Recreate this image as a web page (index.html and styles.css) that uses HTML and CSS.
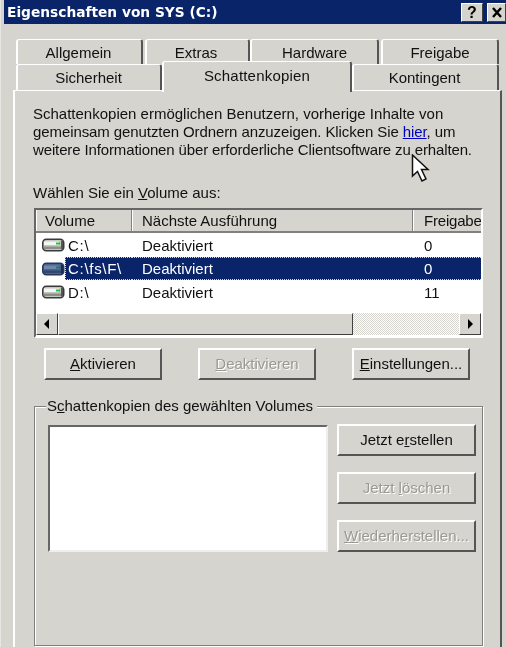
FILE: index.html
```html
<!DOCTYPE html>
<html lang="de">
<head>
<meta charset="utf-8">
<title>Eigenschaften von SYS (C:)</title>
<link rel="stylesheet" href="styles.css">
</head>
<body>
<div class="screen">
  <header class="titlebar">
    <span class="title">Eigenschaften von SYS (C:)</span>
    <span class="capbtns">
      <span class="capbtn">?</span>
      <span class="capbtn capx">
        <svg width="12" height="11" viewBox="0 0 12 11"><path d="M2 1 L10 10 M10 1 L2 10" stroke="#000" stroke-width="2.4" fill="none"/></svg>
      </span>
    </span>
  </header>
  <div class="dialog">
    <div class="tabs">
      <div class="tabrow tabrow-back">
        <div class="tab t-allgemein">Allgemein</div>
        <div class="tab t-extras">Extras</div>
        <div class="tab t-hardware">Hardware</div>
        <div class="tab t-freigabe">Freigabe</div>
      </div>
      <div class="tabrow tabrow-front">
        <div class="tab t-sicherheit">Sicherheit</div>
        <div class="tab tab-active t-schatten">Schattenkopien</div>
        <div class="tab t-kontingent">Kontingent</div>
      </div>
    </div>
    <main class="panel">
      <p class="intro">Schattenkopien ermöglichen Benutzern, vorherige Inhalte von<br><span class="line2">gemeinsam genutzten Ordnern anzuzeigen. Klicken Sie <a class="link">hier</a>, um</span><br><span class="line3">weitere Informationen über erforderliche Clientsoftware zu erhalten.</span></p>
      <p class="list-label">Wählen Sie ein <u>V</u>olume aus:</p>
      <section class="listview">
        <div class="lv-head">
          <div class="col col-vol">Volume</div>
          <div class="col col-next">Nächste Ausführung</div>
          <div class="col col-share">Freigabe</div>
        </div>
        <div class="lv-body">
          <div class="lv-row">
            <div class="cell cell-vol">
              <svg class="drive" width="23" height="14" viewBox="0 0 23 14"><rect x="0.75" y="1.25" width="21" height="11.5" rx="3.5" fill="#c4c6c2" stroke="#3a3a3a" stroke-width="1.5"/><rect x="2" y="3.5" width="15" height="3.5" fill="#f4f6f4"/><rect x="2" y="8.5" width="17" height="2.5" fill="#8c8e8a"/><rect x="14" y="4.5" width="4" height="2" fill="#18c830"/><rect x="19" y="2.5" width="2" height="9" fill="#555"/></svg>
              <span class="vol-name">C:\</span>
            </div>
            <div class="cell cell-next">Deaktiviert</div>
            <div class="cell cell-share">0</div>
          </div>
          <div class="lv-row lv-selected">
            <div class="cell cell-vol">
              <svg class="drive" width="23" height="14" viewBox="0 0 23 14"><rect x="0.75" y="1.25" width="21" height="11.5" rx="3.5" fill="#4a6290" stroke="#26365c" stroke-width="1.5"/><rect x="2" y="3.5" width="15" height="3.5" fill="#6f86ae"/><rect x="2" y="8.5" width="17" height="2.5" fill="#34466e"/><rect x="14" y="4.5" width="4" height="2" fill="#1c7a60"/><rect x="19" y="2.5" width="2" height="9" fill="#1a2a50"/></svg>
              <span class="vol-name sel-name">C:\fs\F\</span>
            </div>
            <div class="cell cell-next sel-next">Deaktiviert</div>
            <div class="cell cell-share sel-share">0</div>
          </div>
          <div class="lv-row">
            <div class="cell cell-vol">
              <svg class="drive" width="23" height="14" viewBox="0 0 23 14"><rect x="0.75" y="1.25" width="21" height="11.5" rx="3.5" fill="#c4c6c2" stroke="#3a3a3a" stroke-width="1.5"/><rect x="2" y="3.5" width="15" height="3.5" fill="#f4f6f4"/><rect x="2" y="8.5" width="17" height="2.5" fill="#8c8e8a"/><rect x="14" y="4.5" width="4" height="2" fill="#18c830"/><rect x="19" y="2.5" width="2" height="9" fill="#555"/></svg>
              <span class="vol-name">D:\</span>
            </div>
            <div class="cell cell-next">Deaktiviert</div>
            <div class="cell cell-share">11</div>
          </div>
        </div>
        <div class="hscroll">
          <div class="sbtn"><svg width="6" height="10" viewBox="0 0 6 10"><path d="M5 0 V10 L0 5 Z" fill="#000"/></svg></div>
          <div class="thumb"></div>
          <div class="track"></div>
          <div class="sbtn"><svg width="6" height="10" viewBox="0 0 6 10"><path d="M1 0 V10 L6 5 Z" fill="#000"/></svg></div>
        </div>
      </section>
      <div class="actions">
        <button class="btn"><u>A</u>ktivieren</button>
        <button class="btn is-disabled"><u>D</u>eaktivieren</button>
        <button class="btn"><u>E</u>instellungen...</button>
      </div>
      <fieldset class="group">
        <legend class="group-label">S<u>c</u>hattenkopien des gewählten Volumes</legend>
        <div class="group-body">
          <div class="copies"></div>
          <div class="side">
            <button class="btn btn-side">Jetzt e<u>r</u>stellen</button>
            <button class="btn btn-side is-disabled">Jetzt <u>l</u>öschen</button>
            <button class="btn btn-side is-disabled"><u>W</u>iederherstellen...</button>
          </div>
        </div>
      </fieldset>
    </main>
  </div>
  <svg class="cursor" width="20" height="30" viewBox="0 0 20 30"><path d="M1.5 1 V22 L6.5 17.5 L11 27 L15 25 L10.5 15.5 L17 15.5 Z" fill="#fff" stroke="#111" stroke-width="1.5"/></svg>
</div>
</body>
</html>
```

FILE: styles.css
```css
* { box-sizing: border-box; }
html, body { margin: 0; padding: 0; }
body { background: #d6d4ce; }
.screen {
  position: relative;
  width: 506px;
  height: 647px;
  overflow: hidden;
  background: #d6d4ce;
  font-family: "Liberation Sans", Arial, sans-serif;
  font-size: 15px;
  color: #111;
  border-left: 1px solid #e8e6e0;
  filter: blur(0.35px);
}
.titlebar {
  height: 24px;
  margin-left: 3px;
  background: #0a246a;
  display: flex;
  align-items: center;
  justify-content: space-between;
  padding: 0 3px 0 3px;
}
.title {
  color: #fff;
  font-family: "DejaVu Sans", sans-serif;
  font-weight: bold;
  font-size: 13.75px;
}
.capbtns { display: flex; gap: 4px; margin-top: 1px; margin-right: -3px; }
.capbtn {
  width: 22px;
  height: 19px;
  background: #d6d4ce;
  border: 1px solid;
  border-color: #fff #404040 #404040 #fff;
  display: flex;
  align-items: center;
  justify-content: center;
  font-weight: bold;
  font-size: 16px;
  color: #000;
}
.capx { width: 19px; }
.dialog { padding: 15px 0 0 12px; }
.tabs { height: 51px; position: relative; z-index: 2; }
.tabrow { display: flex; }
.tabrow-back { height: 25px; padding-left: 3px; }
.tabrow-front { height: 26px; padding-left: 3px; }
.tab {
  background: #d6d4ce;
  border-top: 1px solid #fff;
  border-left: 2px solid #fff;
  border-right: 2px solid #555;
  border-radius: 3px 3px 0 0;
  display: flex;
  align-items: center;
  justify-content: center;
}
.t-allgemein { width: 127px; padding-right: 2px; }
.t-extras { width: 105px; margin-left: 2px; padding-right: 3px; }
.t-hardware { width: 129px; }
.t-freigabe { width: 118px; margin-left: 2px; }
.t-sicherheit { width: 146px; padding-right: 1px; }
.t-kontingent { width: 147px; margin-left: 0; padding-right: 2px; }
.tab-active {
  width: 190px;
  height: 31px;
  margin-top: -3px;
  position: relative;
  padding-top: 0;
  padding-bottom: 3px;
  letter-spacing: 0.2px;
}
.panel {
  width: 489px;
  height: 560px;
  border-top: 1px solid #fff;
  border-left: 2px solid #fff;
  border-right: 2px solid #555;
  padding: 14px 0 0 19px;
}
.intro { margin: 0 0 0 -1px; line-height: 18px; white-space: nowrap; }
.line2 { letter-spacing: -0.09px; }
.line3 { letter-spacing: -0.13px; }
.link { color: #0000c0; text-decoration: underline; }
.list-label { margin: 25px 0 0 -1px; line-height: 18px; white-space: nowrap; }
.listview {
  margin-top: 6px;
  width: 449px;
  height: 130px;
  border: 2px solid;
  border-color: #666 #fff #fff #666;
  background: #fff;
  display: flex;
  flex-direction: column;
}
.lv-head { display: flex; height: 23px; flex: none; background: #d6d4ce; border-bottom: 2px solid #808080; overflow: hidden; }
.col { border-left: 1px solid #fff; border-right: 1px solid #808080; display: flex; align-items: center; padding-left: 8px; white-space: nowrap; }
.col-vol { width: 96px; }
.col-next { width: 281px; padding-left: 9px; }
.col-share { width: 68px; padding-left: 10px; border-right: 0; letter-spacing: -0.2px; }
.lv-body { flex: 1; }
.lv-row { display: flex; height: 24px; align-items: center; }
.lv-row:nth-child(2) { height: 23px; }
.cell { display: flex; align-items: center; height: 100%; white-space: nowrap; }
.cell-vol { width: 96px; padding-left: 6px; gap: 3px; }
.vol-name { letter-spacing: 0.7px; }
.cell-next { width: 281px; padding-left: 10px; }
.cell-share { flex: 1; padding-left: 11px; }
.drive { flex: none; }
.lv-selected { color: #fff; }
.sel-name { background: #0a246a; flex: 1; align-self: stretch; display: flex; align-items: center; margin-left: -3px; padding-left: 2px; border: 1px dotted #e8d890; border-right: 0; }
.sel-next, .sel-share { background: #0a246a; border-top: 1px dotted #e8d890; border-bottom: 1px dotted #e8d890; }
.hscroll { flex: none; height: 22px; display: flex; background: #d6d4ce; margin-bottom: 1px; }
.sbtn {
  width: 22px;
  background: #d6d4ce;
  border: 1px solid;
  border-color: #fff #404040 #404040 #fff;
  display: flex;
  align-items: center;
  justify-content: center;
  flex: none;
}
.thumb { width: 295px; background: #d6d4ce; border: 1px solid; border-color: #fff #404040 #404040 #fff; flex: none; }
.track { flex: 1; background: repeating-conic-gradient(#fff 0 25%, #d6d4ce 0 50%) 0 0 / 2px 2px; }
.actions { display: flex; margin: 10px 0 0 10px; width: 426px; justify-content: space-between; }
.btn {
  font: inherit;
  color: #111;
  padding: 0 0 2px;
  width: 118px;
  height: 32px;
  background: #d6d4ce;
  border: 2px solid;
  border-color: #fff #555 #555 #fff;
  text-align: center;
}
.is-disabled { color: #9a9a94; text-shadow: 1px 1px 0 #fff; }
.group {
  margin: 17px 0 0 0;
  padding: 0;
  width: 449px;
  height: 249px;
  border: 1px solid #808080;
  box-shadow: 1px 1px 0 #fff, inset 1px 1px 0 #fff;
  min-width: 0;
}
.group-label { padding: 0 4px 0 1px; margin-left: 11px; background: #d6d4ce; line-height: 18px; }
.group-body { display: flex; gap: 9px; padding: 10px 0 0 13px; }
.copies { width: 280px; height: 127px; background: #fff; border: 2px solid; border-color: #666 #eee #eee #666; flex: none; }
.side { display: flex; flex-direction: column; gap: 16px; margin-top: -1px; }
.btn-side { width: 139px; }
.cursor { position: absolute; left: 410px; top: 154px; z-index: 5; }
```
